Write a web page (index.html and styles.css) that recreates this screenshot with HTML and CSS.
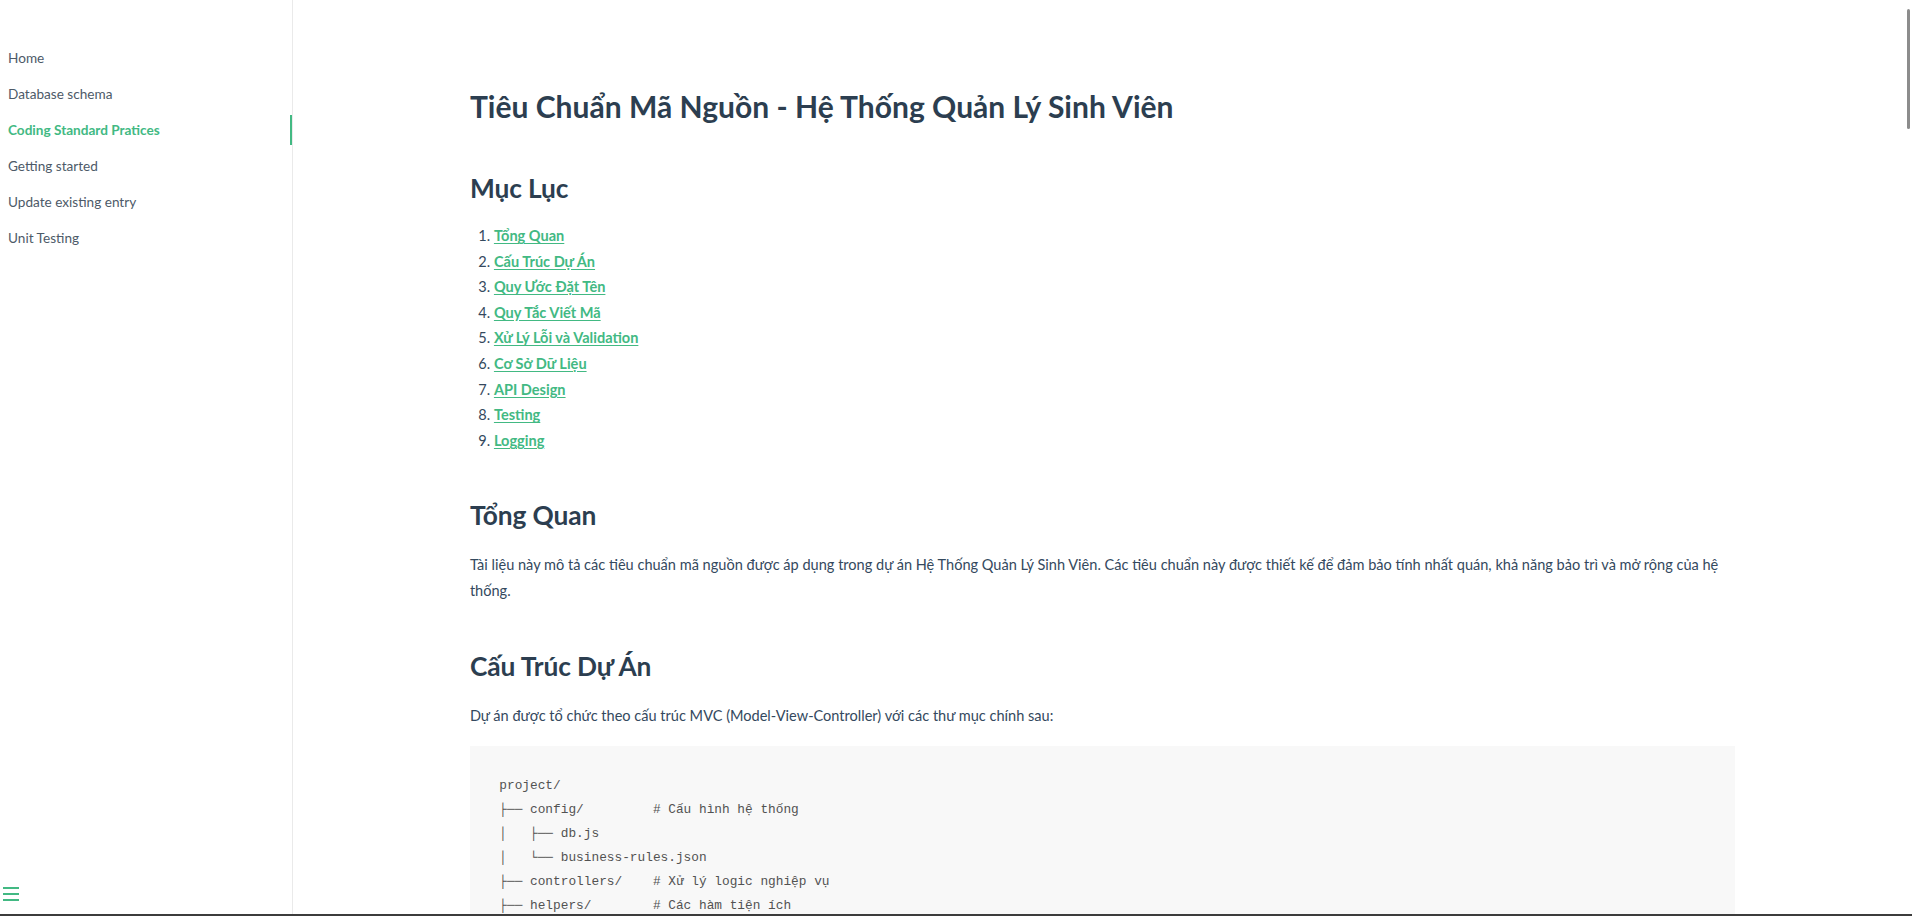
FILE: index.html
```html
<!DOCTYPE html>
<html lang="vi">
<head>
<meta charset="utf-8">
<title>Coding Standard Pratices</title>
<link rel="stylesheet" href="styles.css">
</head>
<body>
<div class="app">
  <aside class="sidebar">
    <nav class="sidebar-nav">
      <ul>
        <li><a href="#">Home</a></li>
        <li><a href="#">Database schema</a></li>
        <li class="active"><a href="#">Coding Standard Pratices</a></li>
        <li><a href="#">Getting started</a></li>
        <li><a href="#">Update existing entry</a></li>
        <li><a href="#">Unit Testing</a></li>
      </ul>
    </nav>
    <button class="sidebar-toggle" aria-label="Toggle sidebar"><span></span><span></span><span></span></button>
  </aside>
  <main class="content">
    <article class="markdown-section">
      <h1>Tiêu Chuẩn Mã Nguồn - Hệ Thống Quản Lý Sinh Viên</h1>
      <h2>Mục Lục</h2>
      <ol class="toc">
        <li><a href="#">Tổng Quan</a></li>
        <li><a href="#">Cấu Trúc Dự Án</a></li>
        <li><a href="#">Quy Ước Đặt Tên</a></li>
        <li><a href="#">Quy Tắc Viết Mã</a></li>
        <li><a href="#">Xử Lý Lỗi và Validation</a></li>
        <li><a href="#">Cơ Sở Dữ Liệu</a></li>
        <li><a href="#">API Design</a></li>
        <li><a href="#">Testing</a></li>
        <li><a href="#">Logging</a></li>
      </ol>
      <h2 class="sec">Tổng Quan</h2>
      <p>Tài liệu này mô tả các tiêu chuẩn mã nguồn được áp dụng trong dự án Hệ Thống Quản Lý Sinh Viên. Các tiêu chuẩn này được thiết kế để đảm bảo tính nhất quán, khả năng bảo trì và mở rộng của hệ thống.</p>
      <h2 class="sec">Cấu Trúc Dự Án</h2>
      <p>Dự án được tổ chức theo cấu trúc MVC (Model-View-Controller) với các thư mục chính sau:</p>
<pre><code>project/
├── config/         # Cấu hình hệ thống
│   ├── db.js
│   └── business-rules.json
├── controllers/    # Xử lý logic nghiệp vụ
├── helpers/        # Các hàm tiện ích</code></pre>
    </article>
  </main>
</div>
<div class="scroll-thumb"></div>
<div class="frame-edge"></div>
</body>
</html>
```
FILE: styles.css
```css
* {
  box-sizing: border-box;
}

html, body {
  margin: 0;
  height: 100%;
  overflow: hidden;
}

body {
  font-family: Lato, "Noto Sans", sans-serif;
  color: #34495e;
  font-size: 14.55px;
  background: #fff;
  -webkit-font-smoothing: antialiased;
}

.app {
  display: flex;
  height: 100vh;
}

/* Sidebar */
.sidebar {
  width: 293px;
  flex: 0 0 293px;
  border-right: 1px solid #eaeaea;
  display: flex;
  flex-direction: column;
}

.sidebar-nav ul {
  list-style: none;
  margin: 0;
  padding: 43px 0 0;
  display: flex;
  flex-direction: column;
  gap: 6px;
}

.sidebar-nav li {
  height: 30px;
  line-height: 30px;
  padding-left: 8px;
  border-right: 2px solid transparent;
}

.sidebar-nav a {
  color: #4d5a68;
  font-size: 13.6px;
  text-decoration: none;
  white-space: nowrap;
}

.sidebar-nav li.active {
  border-right-color: #42b983;
}

.sidebar-nav li.active a {
  color: #42b983;
  font-weight: 700;
}

.sidebar-toggle {
  margin-top: auto;
  align-self: flex-start;
  background: none;
  border: 0;
  padding: 0 0 11px 3px;
  cursor: pointer;
}

.sidebar-toggle span {
  display: block;
  width: 16px;
  height: 2px;
  margin-bottom: 4px;
  background: #42b983;
}

/* Content */
.content {
  flex: 1;
  padding-top: 60px;
  min-width: 0;
}

.markdown-section {
  width: 80%;
  margin: 0 auto;
  padding: 26px 15px 40px;
}

.markdown-section h1,
.markdown-section h2 {
  color: #2c3e50;
  font-weight: 700;
}

.markdown-section h1 {
  font-size: 30px;
  line-height: 40px;
  letter-spacing: 0.02px;
  margin: 0 0 16px;
}

.markdown-section h2 {
  font-size: 26.3px;
  line-height: 34px;
  letter-spacing: -0.1px;
  margin: 45px 0 12.8px;
}

.markdown-section ol {
  margin: 18px 0;
  padding-left: 24px;
  line-height: 25.6px;
}

.markdown-section a {
  color: #42b983;
  font-weight: 700;
  text-decoration: underline;
  text-underline-offset: 2px;
}

.markdown-section p {
  line-height: 25.6px;
  margin: 20px 0 18px;
}

.markdown-section pre {
  background: #f8f8f8;
  margin: 18px 0;
  padding: 0 22.4px;
  line-height: 24px;
  overflow: hidden;
}

.markdown-section pre code {
  display: block;
  font-family: "Liberation Mono", "DejaVu Sans Mono", monospace;
  font-size: 12.8px;
  color: #525252;
  padding: 28.16px 5px;
  margin: 0 2px;
  white-space: pre;
}

/* Overlays */
.scroll-thumb {
  position: fixed;
  right: 2px;
  top: 9px;
  width: 3px;
  height: 120px;
  border-radius: 2px;
  background: #8c8c8c;
}

.frame-edge {
  position: fixed;
  left: 0;
  right: 0;
  bottom: 0;
  height: 2px;
  background: #3c3c3c;
}
```
